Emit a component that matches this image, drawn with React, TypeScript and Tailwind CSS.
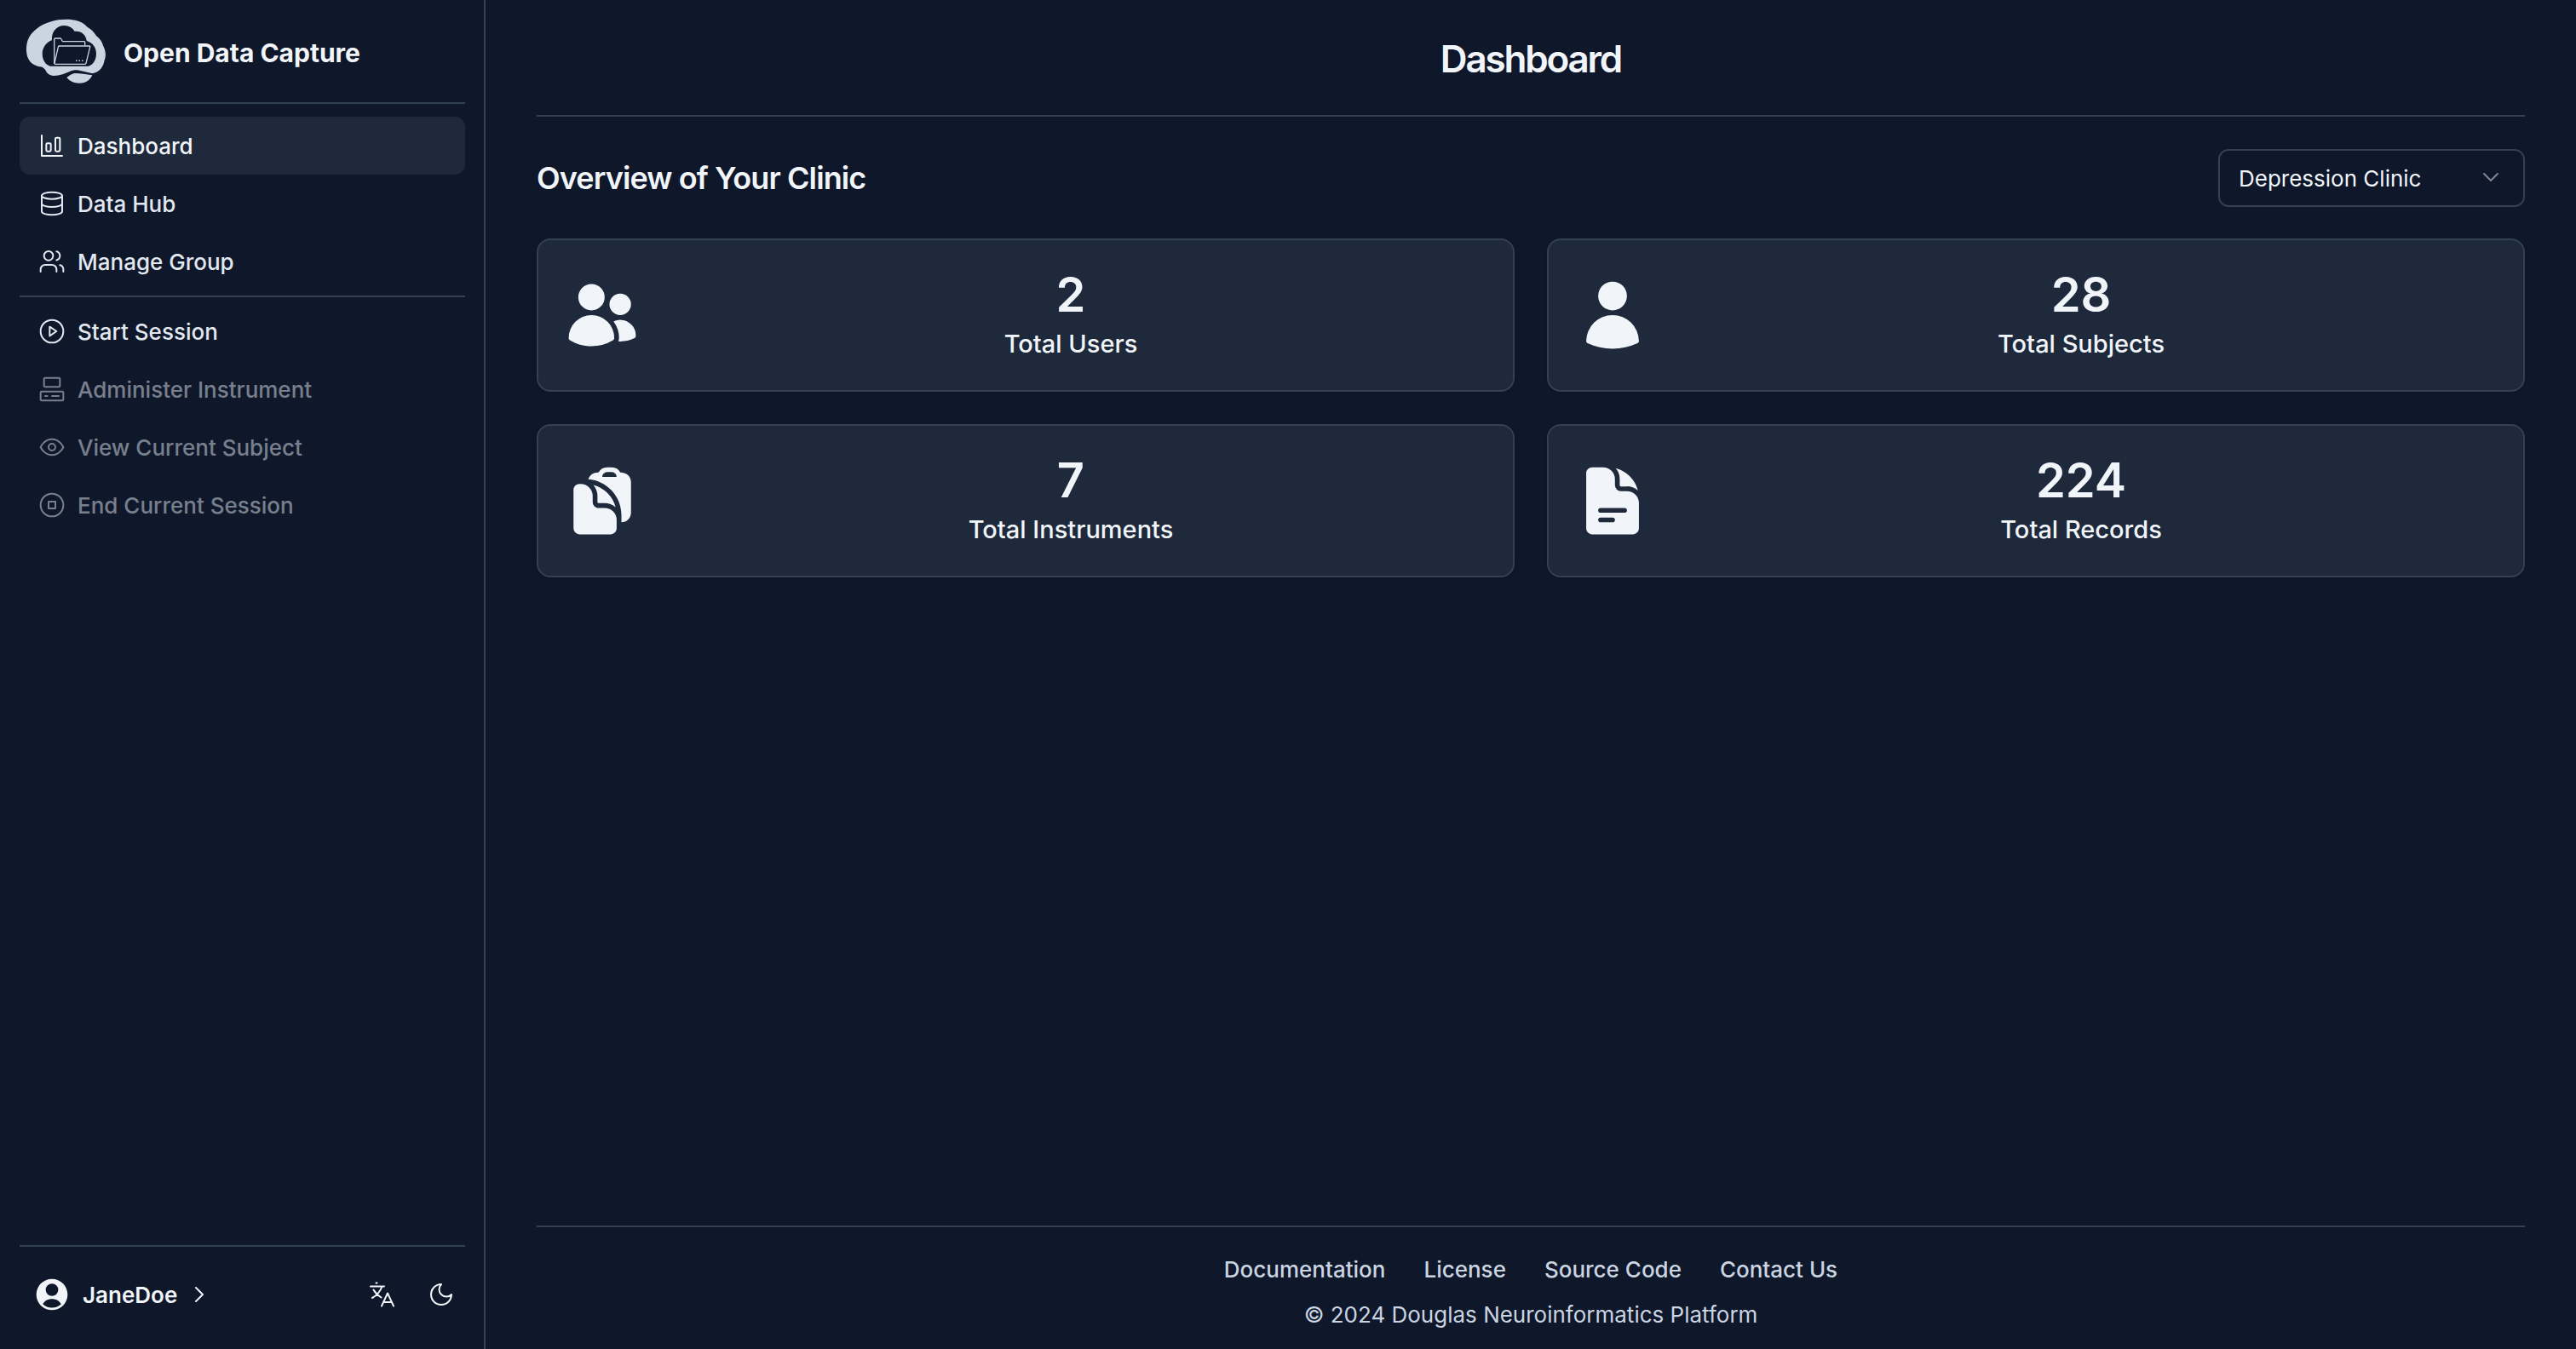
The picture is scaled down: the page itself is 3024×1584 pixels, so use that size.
import { useState } from 'react';
import type { ReactNode } from 'react';
import { HiUser, HiUsers, HiDocumentText, HiClipboardDocument } from 'react-icons/hi2';

type IconProps = { children: ReactNode; className?: string };

function LineIcon({ children, className = 'size-8' }: IconProps) {
  return (
    <svg
      aria-hidden="true"
      className={className}
      fill="none"
      stroke="currentColor"
      strokeLinecap="round"
      strokeLinejoin="round"
      strokeWidth="1.5"
      viewBox="0 0 24 24"
    >
      {children}
    </svg>
  );
}

function Logo() {
  return (
    <svg aria-hidden="true" className="h-21 w-24" viewBox="0 0 96 84">
      <path
        className="fill-[#cbd5e1]"
        d="M32 5C40 2.500 54 2 62 4.500C67 6 70 8 73.500 11.700C78 14 81 17 84 22C88 25 91 29 92 33.500C95 39 96 46 93.500 51C92.500 59 87 65 79.500 66.300L62 62.300C60 62 58 62 55 63C48 66 41 69 34 69C29 68.500 26 66 24.500 62.500C23 60.500 22 59.500 20.300 58.700C13 58 7 54.500 4.500 49.500C1 43 1.500 33 3.700 27C7 18 17 9 32 5Z"
      />
      <path
        className="fill-[#0f172a]"
        d="M32 27C31 17 38 10 46.300 10C52 10 56.500 13 58.700 17C66 16 72 21 72.700 28C80 30 84 36 84 43C84 50 80.500 56 75 57.700H30C24 56 20.700 50 20.700 43C20.700 36 25 30 32 27Z"
      />
      <path
        className="fill-[#cbd5e1]"
        d="M49.300 71C52 69 55 66.500 58.700 66C66 66 72 67 79.300 68.300C77 74 71 78 64 77.700C58 77.500 53 75.500 49.300 71Z"
      />
      <g className="stroke-[#cbd5e1]" fill="none" strokeLinejoin="round" strokeWidth="1.300">
        <path d="M40.300 34H76Q77 34 76.700 35L72 54.300Q71.700 55.300 70.700 55.300H36Q34.700 55.300 35 54L39.500 34.700Q39.700 34 40.300 34Z" />
        <path d="M34.700 55V26Q34.700 25 35.700 25H41.500Q42.500 25 43 26L44.500 28.700H69.700Q70.700 28.700 70.700 29.700V33.500" />
      </g>
      <path className="stroke-[#cbd5e1]" d="M60 51.300h1.500m2 0h1.500m2 0h1.500" strokeWidth="1.500" />
    </svg>
  );
}

const primary = [
  {
    label: 'Dashboard',
    icon: (
      <>
        <path d="M3 3v18h18" />
        <rect height="7" rx="1" width="4" x="7" y="10" />
        <rect height="12" rx="1" width="4" x="15" y="5" />
      </>
    )
  },
  {
    label: 'Data Hub',
    icon: (
      <>
        <ellipse cx="12" cy="5" rx="9" ry="3" />
        <path d="M3 5v14a9 3 0 0 0 18 0V5" />
        <path d="M3 12a9 3 0 0 0 18 0" />
      </>
    )
  },
  {
    label: 'Manage Group',
    icon: (
      <>
        <path d="M16 21v-2a4 4 0 0 0-4-4H6a4 4 0 0 0-4 4v2" />
        <circle cx="9" cy="7" r="4" />
        <path d="M22 21v-2a4 4 0 0 0-3-3.87" />
        <path d="M16 3.13a4 4 0 0 1 0 7.75" />
      </>
    )
  }
];

const session = [
  {
    label: 'Start Session',
    disabled: false,
    icon: (
      <>
        <circle cx="12" cy="12" r="10" />
        <polygon points="10 8 16 12 10 16 10 8" />
      </>
    )
  },
  {
    label: 'Administer Instrument',
    disabled: true,
    icon: (
      <>
        <rect height="8" rx="1" width="14" x="5" y="2" />
        <rect height="8" rx="1" width="20" x="2" y="14" />
        <path d="M6 18h2" />
        <path d="M12 18h6" />
      </>
    )
  },
  {
    label: 'View Current Subject',
    disabled: true,
    icon: (
      <>
        <path d="M2 12s3-7 10-7 10 7 10 7-3 7-10 7-10-7-10-7Z" />
        <circle cx="12" cy="12" r="3" />
      </>
    )
  },
  {
    label: 'End Current Session',
    disabled: true,
    icon: (
      <>
        <circle cx="12" cy="12" r="10" />
        <rect height="6" width="6" x="9" y="9" />
      </>
    )
  }
];

const stats = [
  { label: 'Total Users', value: 2, Icon: HiUsers },
  { label: 'Total Subjects', value: 28, Icon: HiUser },
  { label: 'Total Instruments', value: 7, Icon: HiClipboardDocument },
  { label: 'Total Records', value: 224, Icon: HiDocumentText }
];

const links = ['Documentation', 'License', 'Source Code', 'Contact Us'];

function NavButton({
  label,
  icon,
  active = false,
  disabled = false,
  onClick
}: {
  label: string;
  icon: ReactNode;
  active?: boolean;
  disabled?: boolean;
  onClick?: () => void;
}) {
  return (
    <button
      aria-current={active ? 'page' : undefined}
      className={
        active
          ? 'flex h-17 w-full items-center gap-3.5 rounded-xl bg-[#1e293b] px-5.5 text-[26px] font-medium text-[#f1f5f9]'
          : 'flex h-17 w-full items-center gap-3.5 rounded-xl px-5.5 text-[26px] font-medium text-[#e2e8f0] disabled:text-[#e2e8f0]/50'
      }
      disabled={disabled}
      type="button"
      onClick={onClick}
    >
      <LineIcon>{icon}</LineIcon>
      {label}
    </button>
  );
}

function Sidebar() {
  const [page, setPage] = useState('Dashboard');
  return (
    <aside className="flex w-[570px] shrink-0 flex-col border-r-2 border-[#334155] pr-[22px] pl-[23px]">
      <div className="flex h-30 items-center gap-5 pt-1 pl-1.5">
        <Logo />
        <span className="text-[30px] font-bold">Open Data Capture</span>
      </div>
      <hr className="border-t-2 border-[#334155]" />
      <nav className="mt-[15px]">
        {primary.map((item) => (
          <NavButton
            key={item.label}
            active={page === item.label}
            icon={item.icon}
            label={item.label}
            onClick={() => setPage(item.label)}
          />
        ))}
        <hr className="my-1.5 border-t-2 border-[#334155]" />
        {session.map((item) => (
          <NavButton key={item.label} disabled={item.disabled} icon={item.icon} label={item.label} />
        ))}
      </nav>
      <div className="mt-auto flex h-[122px] items-center border-t-2 border-[#334155] pr-3 pb-2 pl-4">
        <button className="flex items-center gap-3.5 text-[26px] font-semibold" type="button">
          <svg aria-hidden="true" className="size-11" fill="currentColor" viewBox="0 0 24 24">
            <path d="M12 2C6.480 2 2 6.480 2 12s4.480 10 10 10 10-4.480 10-10S17.520 2 12 2zm0 3a4 4 0 1 1 0 8 4 4 0 0 1 0-8zm0 15.500c-2.300 0-4.400-.900-5.900-2.400C7.300 15.900 9.500 14.800 12 14.800s4.700 1.100 5.900 3.300C16.400 19.600 14.300 20.500 12 20.500z" />
          </svg>
          JaneDoe
          <LineIcon className="-ml-0.5 size-6 stroke-2">
            <path d="m10 4 8 8-8 8" />
          </LineIcon>
        </button>
        <button aria-label="Change language" className="ml-auto" type="button">
          <svg
            aria-hidden="true"
            className="size-8"
            fill="none"
            stroke="currentColor"
            strokeLinecap="round"
            strokeLinejoin="round"
            strokeWidth="2"
            viewBox="0 0 32 32"
          >
            <path d="M9.500 2.500h1M3 6.500h16M16.500 6.500C14.500 12 10.500 17 5 20M6.500 10.500C8.500 14 11.500 17 15.500 19.500" />
            <path d="M16 29.500 23 14.500l7 15M18.500 25h9" />
          </svg>
        </button>
        <button aria-label="Toggle theme" className="ml-[38px]" type="button">
          <LineIcon>
            <path d="M12 3a6 6 0 0 0 9 9 9 9 0 1 1-9-9Z" />
          </LineIcon>
        </button>
      </div>
    </aside>
  );
}

export default function App() {
  return (
    <div className="flex min-h-screen bg-[#0f172a] font-['Inter',sans-serif] text-[#f1f5f9]">
      <Sidebar />
      <div className="flex grow flex-col px-15">
        <header className="flex h-[137px] items-center justify-center border-b-2 border-[#334155] pt-0.5">
          <h1 className="text-[44px] font-semibold tracking-tighter">Dashboard</h1>
        </header>
        <main className="grow">
          <div className="mt-[38px] flex items-center justify-between">
            <h2 className="text-[36px] font-semibold tracking-tight">Overview of Your Clinic</h2>
            <div className="relative">
              <select
                aria-label="Clinic"
                className="h-17 w-90 appearance-none rounded-xl border-2 border-[#334155] px-5.5 text-[26px]"
                defaultValue="Depression Clinic"
              >
                <option>Depression Clinic</option>
              </select>
              <LineIcon className="pointer-events-none absolute top-[21px] right-7 size-6 stroke-2 text-[#f1f5f9]/50">
                <path d="m4 8 8 8 8-8" />
              </LineIcon>
            </div>
          </div>
          <div className="mt-[37px] grid grid-cols-2 gap-[38px]">
            {stats.map(({ label, value, Icon }) => (
              <div
                key={label}
                className="flex h-45 items-center gap-4 rounded-2xl border-2 border-[#334155] bg-[#1e293b] px-7.5 shadow-sm"
              >
                <Icon aria-hidden="true" className="size-[90px]" />
                <div className="grow pt-2 text-center">
                  <p className="text-[56px] leading-15 font-semibold">{value}</p>
                  <p className="text-[29px] leading-14 font-medium">{label}</p>
                </div>
              </div>
            ))}
          </div>
        </main>
        <footer className="flex h-[145px] flex-col items-center border-t-2 border-[#334155] pt-[30px] text-[26px] text-[#cbd5e1]">
          <nav className="flex gap-[45px] font-medium">
            {links.map((label) => (
              <a key={label} href="#">
                {label}
              </a>
            ))}
          </nav>
          <p className="mt-3.5">© 2024 Douglas Neuroinformatics Platform</p>
        </footer>
      </div>
    </div>
  );
}
